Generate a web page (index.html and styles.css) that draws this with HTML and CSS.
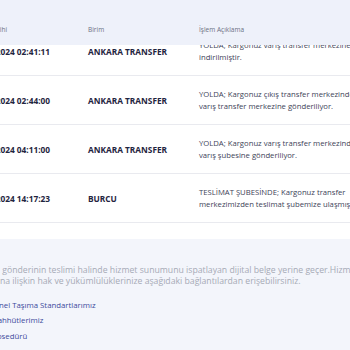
FILE: index.html
```html
<!DOCTYPE html>
<html lang="tr">
<head>
<meta charset="utf-8">
<link rel="stylesheet" href="styles.css">
</head>
<body>
<div class="viewport">
  <section class="table-card">
    <div class="table">
      <div class="thead">
        <div class="cell c-date">İşlem Tarihi</div>
        <div class="cell c-unit">Birim</div>
        <div class="cell c-desc">İşlem Açıklama</div>
      </div>
      <div class="tbody">
        <div class="row">
          <div class="cell c-date">29.05.2024 02:41:11</div>
          <div class="cell c-unit">ANKARA TRANSFER</div>
          <div class="cell c-desc">YOLDA; Kargonuz varış transfer merkezine<br>indirilmiştir.</div>
        </div>
        <div class="row">
          <div class="cell c-date">29.05.2024 02:44:00</div>
          <div class="cell c-unit">ANKARA TRANSFER</div>
          <div class="cell c-desc">YOLDA; Kargonuz çıkış transfer merkezinden<br>varış transfer merkezine gönderiliyor.</div>
        </div>
        <div class="row">
          <div class="cell c-date">29.05.2024 04:11:00</div>
          <div class="cell c-unit">ANKARA TRANSFER</div>
          <div class="cell c-desc">YOLDA; Kargonuz varış transfer merkezinden<br>varış şubesine gönderiliyor.</div>
        </div>
        <div class="row">
          <div class="cell c-date">29.05.2024 14:17:23</div>
          <div class="cell c-unit">BURCU</div>
          <div class="cell c-desc">TESLİMAT ŞUBESİNDE; Kargonuz transfer<br>merkezimizden teslimat şubemize ulaşmıştır.</div>
        </div>
      </div>
    </div>
  </section>
  <section class="info">
    <p class="note">Bu gönderinin teslimi halinde hizmet sunumunu ispatlayan dijital belge yerine geçer.Hizmetlerimize<br>Buna ilişkin hak ve yükümlülüklerinize aşağıdaki bağlantılardan erişebilirsiniz.</p>
    <ul class="links">
      <li><a href="#">Genel Taşıma Standartlarımız</a></li>
      <li><a href="#">Taahhütlerimiz</a></li>
      <li><a href="#">Prosedürü</a></li>
    </ul>
  </section>
</div>
</body>
</html>
```
FILE: styles.css
```css
html, body {
  margin: 0;
  padding: 0;
}
body {
  background: #f3f5fb;
  font-family: "Open Sans", "Liberation Sans", sans-serif;
  width: 350px;
  height: 350px;
  overflow: hidden;
}
.viewport {
  width: 350px;
  overflow: hidden;
}
.table-card {
  background: #ffffff;
  padding-bottom: 16px;
}
.table {
  margin-left: -28px;
  width: 560px;
}
.thead {
  position: relative;
  z-index: 1;
  display: flex;
  align-items: flex-end;
  height: 45px;
  box-sizing: border-box;
  padding-bottom: 11px;
  background: #eef1fa;
  color: #6b7082;
  font-size: 6.5px;
}
.cell {
  flex: none;
  white-space: nowrap;
}
.c-date { width: 116px; }
.c-unit { width: 111px; }
.c-desc { width: 300px; }
.tbody {
  margin-top: -18px;
}
.row {
  display: flex;
  align-items: center;
  height: 49px;
  box-sizing: border-box;
  border-bottom: 1px solid #e9eaef;
}
.row .c-date,
.row .c-unit {
  font-weight: 700;
  font-size: 8.3px;
  color: #1f2540;
}
.row .c-desc {
  font-size: 7.7px;
  line-height: 12.5px;
  color: #3e4358;
}
.info {
  padding-top: 26px;
}
.note {
  margin: 0 0 12.5px -11px;
  white-space: nowrap;
  font-size: 8.7px;
  line-height: 11px;
  color: #a6aab6;
}
.links {
  list-style: none;
  margin: 0 0 0 -11px;
  padding: 0;
  display: flex;
  flex-direction: column;
  gap: 4.5px;
}
.links a {
  display: block;
  font-size: 7.8px;
  line-height: 11px;
  color: #3c4a9c;
  text-decoration: none;
}
```
